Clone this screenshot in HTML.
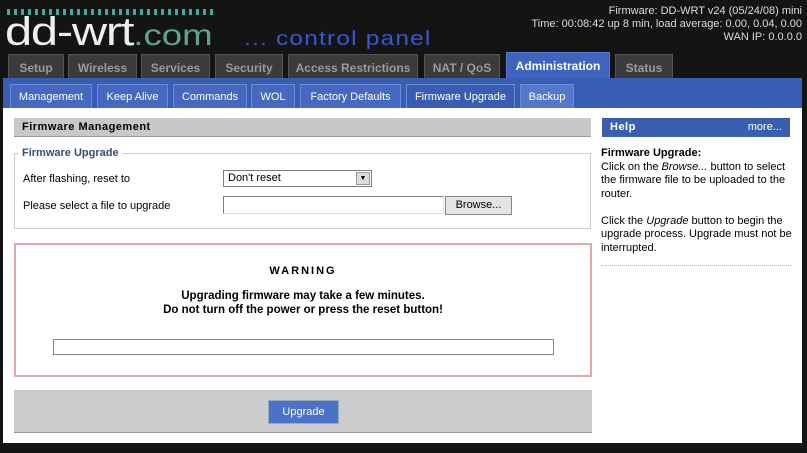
<!DOCTYPE html>
<html><head><style>
*{margin:0;padding:0;box-sizing:border-box}
body{width:807px;height:453px;background:#141414;position:relative;overflow:hidden;font-family:"Liberation Sans",Arial,sans-serif;font-size:11px;color:#000}
.a{position:absolute;white-space:nowrap}
.tab{position:absolute;top:54px;height:24px;background:#3b3b3b;color:#9a9a9a;font-weight:bold;font-size:12px;text-align:center;line-height:26px;border:1px solid #555;border-bottom:none;white-space:nowrap}
.st{position:absolute;top:84px;height:24px;background:#4668c0;color:#fff;font-size:11px;text-align:center;line-height:25px;border:1px solid #6d8ad6;border-bottom:none;white-space:nowrap}
</style></head><body>
<div class="a" style="left:7px;top:9px;width:206px;height:6px;background:repeating-linear-gradient(90deg,#4a9 0 3px,transparent 3px 7px)"></div>
<div class="a" style="left:5px;top:12px;font-size:40px;color:#eee;font-family:'Liberation Sans',sans-serif;letter-spacing:-1px;line-height:40px;transform:scaleX(1.22);transform-origin:0 0">dd-wrt<span style="color:#5ca58c;font-size:30px;letter-spacing:0">.com</span></div>
<div class="a" style="left:244px;top:28px;font-size:20px;color:#3c55d0;font-family:'Liberation Sans',sans-serif;letter-spacing:1px;transform:scaleX(1.22);transform-origin:0 0">... control panel</div>
<div class="a" style="right:5px;top:5px;text-align:right;color:#ddd;font-size:11px;line-height:13px">Firmware: DD-WRT v24 (05/24/08) mini<br>Time: 00:08:42 up 8 min, load average: 0.00, 0.04, 0.00<br>WAN IP: 0.0.0.0</div>
<div class="tab" style="left:8px;width:56px">Setup</div>
<div class="tab" style="left:68px;width:69px">Wireless</div>
<div class="tab" style="left:141px;width:69px">Services</div>
<div class="tab" style="left:215px;width:68px">Security</div>
<div class="tab" style="left:288px;width:130px">Access Restrictions</div>
<div class="tab" style="left:424px;width:76px">NAT / QoS</div>
<div class="tab" style="left:506px;top:52px;height:27px;width:104px;background:#3f64bf;color:#fff;border-color:#5a7ad0;line-height:26px">Administration</div>
<div class="tab" style="left:615px;width:58px">Status</div>
<div class="a" style="left:3px;top:78px;width:799px;height:30px;background:#3a5db4"></div>
<div class="st" style="left:10px;width:82px">Management</div>
<div class="st" style="left:97px;width:71px">Keep Alive</div>
<div class="st" style="left:173px;width:74px">Commands</div>
<div class="st" style="left:251px;width:44px">WOL</div>
<div class="st" style="left:300px;width:101px">Factory Defaults</div>
<div class="st" style="left:406px;width:109px;background:#3a5db4">Firmware Upgrade</div>
<div class="st" style="left:520px;width:54px;background:#5478cc">Backup</div>
<div class="a" style="left:3px;top:108px;width:799px;height:335px;background:#fff"></div>
<div class="a" style="left:14px;top:118px;width:577px;height:19px;background:#c8c8c8;border-bottom:1px solid #999;font-weight:bold;font-size:11px;line-height:19px;padding-left:8px;letter-spacing:.5px">Firmware Management</div>
<div class="a" style="left:14px;top:153px;width:577px;height:76px;border:1px solid #ccc"></div>
<div class="a" style="left:19px;top:147px;background:#fff;padding:0 3px;color:#3a4a7a;font-weight:bold">Firmware Upgrade</div>
<div class="a" style="left:23px;top:173px">After flashing, reset to</div>
<div class="a" style="left:23px;top:200px">Please select a file to upgrade</div>
<div class="a" style="left:223px;top:170px;width:149px;height:17px;border:1px solid #7a7a7a;background:#fff;padding-left:4px;line-height:15px">Don't reset<div class="a" style="right:1px;top:1px;width:14px;height:13px;background:#ddd;border:1px solid #999;font-size:7px;text-align:center;line-height:12px">▼</div></div>
<div class="a" style="left:223px;top:196px;width:221px;height:18px;border:1px solid #7a7a7a;border-right-color:#ddd;border-bottom-color:#ddd"></div>
<div class="a" style="left:445px;top:196px;width:67px;height:19px;background:#e4e4e4;border:1px solid #888;text-align:center;line-height:17px">Browse...</div>
<div class="a" style="left:14px;top:243px;width:578px;height:134px;border:2px solid #e0a8a8"></div>
<div class="a" style="left:14px;top:265px;width:578px;text-align:center;font-weight:bold;letter-spacing:2px">WARNING</div>
<div class="a" style="left:14px;top:289px;width:578px;text-align:center;font-weight:bold;font-size:11.5px;line-height:14px">Upgrading firmware may take a few minutes.<br>Do not turn off the power or press the reset button!</div>
<div class="a" style="left:53px;top:339px;width:501px;height:16px;border:1px solid #888"></div>
<div class="a" style="left:14px;top:390px;width:578px;height:43px;background:#ccc;border-bottom:1px solid #999"></div>
<div class="a" style="left:268px;top:400px;width:71px;height:24px;background:#4a72c8;border:1px solid #9ab;color:#fff;text-align:center;line-height:22px">Upgrade</div>
<div class="a" style="left:602px;top:118px;width:188px;height:19px;background:#3a5fb0;color:#fff;line-height:19px;padding:0 8px"><b style="letter-spacing:.5px">Help</b><span style="float:right">more...</span></div>
<div class="a" style="left:601px;top:147px;width:195px;line-height:13.5px;font-size:11px;white-space:normal"><b>Firmware Upgrade:</b><br>Click on the <i>Browse...</i> button to select the firmware file to be uploaded to the router.<br><br>Click the <i>Upgrade</i> button to begin the upgrade process. Upgrade must not be interrupted.</div>
<div class="a" style="left:601px;top:265px;width:190px;border-top:1px dotted #bbb"></div>
</body></html>
